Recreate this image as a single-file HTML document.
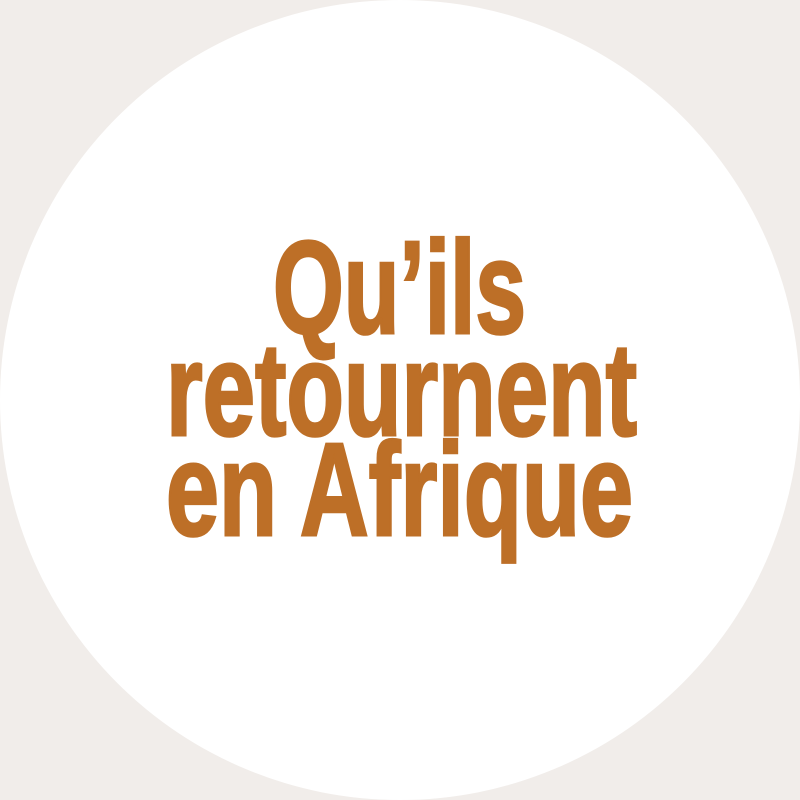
<!DOCTYPE html>
<html><head><meta charset="utf-8"><style>
html,body{margin:0;padding:0;background:#f1edea;}
</style></head><body>
<svg width="800" height="800" viewBox="0 0 800 800" xmlns="http://www.w3.org/2000/svg" style="display:block">
<rect width="800" height="800" fill="#f1edea"/>
<circle cx="400" cy="400" r="400" fill="#ffffff"/>
<g fill="#bd6f27" stroke="#bd6f27" stroke-width="3" stroke-linejoin="miter" font-family="Liberation Sans, sans-serif" font-weight="bold" font-size="132">
<text x="273" y="333" textLength="253" lengthAdjust="spacingAndGlyphs">Qu’ils</text>
<text x="166" y="435" textLength="471" lengthAdjust="spacingAndGlyphs">retournent</text>
<text x="166" y="535" textLength="467" lengthAdjust="spacingAndGlyphs">en Afrique</text>
</g>
</svg>
</body></html>
